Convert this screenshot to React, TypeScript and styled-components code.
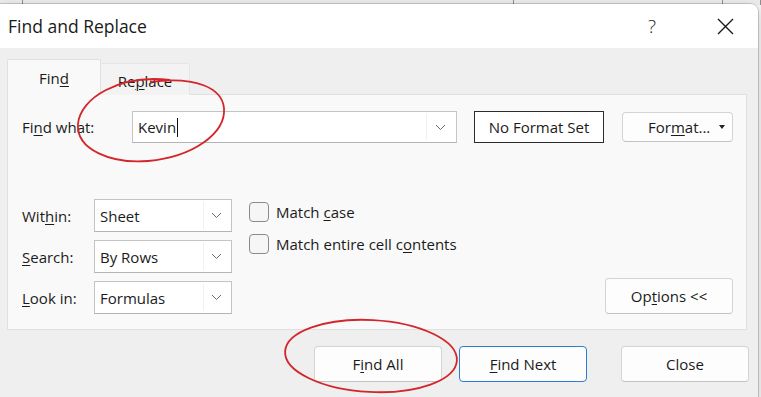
import styled, { createGlobalStyle } from "styled-components";

const GlobalStyle = createGlobalStyle`
  html, body {
    margin: 0;
    padding: 0;
  }
  body {
    width: 761px;
    height: 397px;
    overflow: hidden;
    background: #f2f2f2;
    font-family: "Open Sans", "Noto Sans", sans-serif;
    color: #1b1b1b;
  }
`;

const Screen = styled.div`
  position: relative;
  width: 761px;
  height: 397px;
  overflow: hidden;
  background: #f4f4f4;
`;

const SheetRow = styled.div`
  display: flex;
  height: 5px;
  overflow: hidden;
  background: #ececec;
`;

const SheetCell = styled.div<{ w: number }>`
  flex: 0 0 ${(p) => p.w}px;
  border-right: 1px solid #8f8f8f;
  box-sizing: border-box;
  padding-left: ${(p) => (p.w > 400 ? 328 : 0)}px;
`;

const SheetText = styled.span`
  display: block;
  margin-top: -19px;
  font-size: 20px;
  font-weight: 700;
  line-height: 22px;
  color: #111;
`;

const Dialog = styled.div`
  position: absolute;
  top: 4px;
  left: 0;
  width: 758px;
  height: 400px;
  display: flex;
  flex-direction: column;
  background: #efefef;
  border-radius: 0 8px 8px 0;
  box-shadow: 0 0 0 1px rgba(0, 0, 0, 0.16), 0 4px 14px rgba(0, 0, 0, 0.18);
  overflow: hidden;
`;

const TitleBar = styled.div`
  height: 44px;
  flex: 0 0 44px;
  display: flex;
  align-items: center;
  padding: 0 10px 0 8px;
  background: #ffffff;
`;

const Title = styled.div`
  font-size: 17.5px;
  color: #1a1a1a;
  flex: 1;
`;

const TitleActions = styled.div`
  display: flex;
  align-items: center;
  gap: 27px;
`;

const TitleButton = styled.div`
  width: 46px;
  height: 30px;
  display: flex;
  align-items: center;
  justify-content: center;
  font-size: 19px;
  font-weight: 300;
  color: #222;
`;

const Body = styled.div`
  flex: 1;
  padding: 12px 11px 0 7px;
`;

const Tabs = styled.div`
  display: flex;
  align-items: flex-end;
  height: 35px;
  margin-bottom: -1px;
  position: relative;
  z-index: 1;
`;

const Tab = styled.div<{ active?: boolean }>`
  box-sizing: border-box;
  width: ${(p) => (p.active ? 94 : 89)}px;
  height: ${(p) => (p.active ? 36 : 32)}px;
  display: flex;
  align-items: center;
  justify-content: center;
  font-size: 15px;
  padding-top: ${(p) => (p.active ? 1 : 2)}px;
  background: ${(p) => (p.active ? "#f9f9f9" : "#f3f3f3")};
  border: 1px solid ${(p) => (p.active ? "#e0e0e0" : "#e6e6e6")};
  border-bottom: none;
  border-left: ${(p) => (p.active ? "1px solid #e0e0e0" : "none")};
  border-radius: 2px 2px 0 0;
`;

const Key = styled.u`
  text-decoration: underline;
  text-underline-offset: 2px;
  text-decoration-thickness: 1px;
`;

const Panel = styled.div`
  box-sizing: border-box;
  height: 236px;
  padding: 16px 13px 0 14px;
  background: #f9f9f9;
  border: 1px solid #e0e0e0;
`;

const FindRow = styled.div`
  display: flex;
  align-items: center;
  height: 32px;
`;

const FieldLabel = styled.div<{ w: number }>`
  width: ${(p) => p.w}px;
  flex: 0 0 ${(p) => p.w}px;
  font-size: 15px;
  color: #1b1b1b;
`;

const Combo = styled.div<{ w: number; h: number }>`
  box-sizing: border-box;
  width: ${(p) => p.w}px;
  height: ${(p) => p.h}px;
  display: flex;
  align-items: stretch;
  background: #ffffff;
  border: 1px solid #c4c4c4;
  border-bottom-color: #b4b4b4;
`;

const ComboText = styled.div`
  flex: 1;
  display: flex;
  align-items: center;
  padding-left: 5px;
  font-size: 15px;
  color: #1b1b1b;
`;

const Caret = styled.span`
  display: inline-block;
  width: 1px;
  height: 19px;
  margin-left: 1px;
  background: #111;
`;

const ComboArrow = styled.div<{ w: number }>`
  width: ${(p) => p.w}px;
  display: flex;
  align-items: center;
  justify-content: center;
  border-left: 1px solid #f0f0f0;
  margin: 2px 2px 2px 0;
`;

const FormatBox = styled.div`
  box-sizing: border-box;
  width: 130px;
  height: 32px;
  margin-left: 17px;
  display: flex;
  align-items: center;
  justify-content: center;
  border: 1.5px solid #2b2b2b;
  background: #ffffff;
  font-size: 15px;
`;

const Button = styled.div<{ w: number; h: number; primary?: boolean }>`
  box-sizing: border-box;
  width: ${(p) => p.w}px;
  height: ${(p) => p.h}px;
  display: flex;
  align-items: center;
  justify-content: center;
  font-size: 15px;
  color: #1b1b1b;
  background: #fdfdfd;
  border: 1px solid ${(p) => (p.primary ? "#2f7dd1" : "#d4d4d4")};
  border-bottom-color: ${(p) => (p.primary ? "#2f7dd1" : "#c2c2c2")};
  border-radius: 4px;
`;

const FormatButton = styled(Button)`
  margin-left: 18px;
  justify-content: flex-start;
  padding: 0 5px 0 25px;
`;

const DropMark = styled.span`
  margin-left: auto;
  width: 0;
  height: 0;
  border-left: 3px solid transparent;
  border-right: 3px solid transparent;
  border-top: 4px solid #222;
  margin-right: 2px;
`;

const OptionsArea = styled.div`
  display: flex;
  margin-top: 56px;
`;

const SelectGrid = styled.div`
  display: grid;
  grid-template-columns: 72px 138px;
  grid-auto-rows: 33px;
  row-gap: 8px;
  align-items: center;
`;

const CheckColumn = styled.div`
  display: flex;
  flex-direction: column;
  gap: 12px;
  margin: 3px 0 0 17px;
`;

const CheckRow = styled.label`
  display: flex;
  align-items: center;
  gap: 7px;
  font-size: 15px;
  height: 20px;
`;

const Box = styled.span`
  box-sizing: border-box;
  width: 20px;
  height: 20px;
  border: 1px solid #8a8a8a;
  border-radius: 4px;
  background: #f6f6f6;
`;

const OptionsButton = styled(Button)`
  margin-left: auto;
  align-self: flex-end;
`;

const Footer = styled.div`
  display: flex;
  justify-content: flex-end;
  gap: 17px;
  padding-top: 16px;
  margin-right: -2px;
`;

const CloseButton = styled(Button)`
  margin-left: 17px;
`;

const Annotations = styled.svg`
  position: absolute;
  left: 0;
  top: 0;
  pointer-events: none;
  z-index: 10;
`;

function Chevron() {
  return (
    <svg width="11" height="7" viewBox="0 0 11 7">
      <polyline points="1,1 5.5,5.5 10,1" fill="none" stroke="#6b6b6b" strokeWidth="1" />
    </svg>
  );
}

function Select({ value }: { value: string }) {
  return (
    <Combo w={138} h={33}>
      <ComboText>{value}</ComboText>
      <ComboArrow w={25}>
        <Chevron />
      </ComboArrow>
    </Combo>
  );
}

export default function App() {
  return (
    <Screen>
      <GlobalStyle />
      <SheetRow>
        <SheetCell w={23} />
        <SheetCell w={491}>
          <SheetText>Cameron</SheetText>
        </SheetCell>
        <SheetCell w={209} />
        <SheetCell w={38} />
      </SheetRow>

      <Dialog>
        <TitleBar>
          <Title>Find and Replace</Title>
          <TitleActions>
            <TitleButton>?</TitleButton>
            <TitleButton>
              <svg width="17" height="17" viewBox="0 0 17 17">
                <path d="M1 1 L16 16 M16 1 L1 16" stroke="#1a1a1a" strokeWidth="1.4" />
              </svg>
            </TitleButton>
          </TitleActions>
        </TitleBar>

        <Body>
          <Tabs>
            <Tab active>
              <span>
                Fin<Key>d</Key>
              </span>
            </Tab>
            <Tab>
              <span>
                Re<Key>p</Key>lace
              </span>
            </Tab>
          </Tabs>

          <Panel>
            <FindRow>
              <FieldLabel w={110}>
                Fi<Key>n</Key>d what:
              </FieldLabel>
              <Combo w={325} h={32}>
                <ComboText>
                  Kevin
                  <Caret />
                </ComboText>
                <ComboArrow w={27}>
                  <Chevron />
                </ComboArrow>
              </Combo>
              <FormatBox>No Format Set</FormatBox>
              <FormatButton w={111} h={30}>
                <span>
                  For<Key>m</Key>at...
                </span>
                <DropMark />
              </FormatButton>
            </FindRow>

            <OptionsArea>
              <SelectGrid>
                <FieldLabel w={72}>
                  Wit<Key>h</Key>in:
                </FieldLabel>
                <Select value="Sheet" />
                <FieldLabel w={72}>
                  <Key>S</Key>earch:
                </FieldLabel>
                <Select value="By Rows" />
                <FieldLabel w={72}>
                  <Key>L</Key>ook in:
                </FieldLabel>
                <Select value="Formulas" />
              </SelectGrid>

              <CheckColumn>
                <CheckRow>
                  <Box />
                  <span>
                    Match <Key>c</Key>ase
                  </span>
                </CheckRow>
                <CheckRow>
                  <Box />
                  <span>
                    Match entire cell c<Key>o</Key>ntents
                  </span>
                </CheckRow>
              </CheckColumn>

              <OptionsButton w={128} h={36}>
                <span>
                  Op<Key>t</Key>ions &lt;&lt;
                </span>
              </OptionsButton>
            </OptionsArea>
          </Panel>

          <Footer>
            <Button w={128} h={36}>
              <span>
                F<Key>i</Key>nd All
              </span>
            </Button>
            <Button w={128} h={36} primary>
              <span>
                <Key>F</Key>ind Next
              </span>
            </Button>
            <CloseButton w={128} h={36}>
              Close
            </CloseButton>
          </Footer>
        </Body>
      </Dialog>

      <Annotations width="761" height="397" viewBox="0 0 761 397">
        <path
          d="M170 80 C 120 74, 80 98, 78 124 C 76 150, 112 164, 148 161 C 192 157, 226 134, 224 108 C 222 88, 196 76, 150 82"
          fill="none"
          stroke="#d3262b"
          strokeWidth="1.8"
        />
        <ellipse
          cx="371"
          cy="356"
          rx="86"
          ry="36"
          transform="rotate(3 371 356)"
          fill="none"
          stroke="#d3262b"
          strokeWidth="1.8"
        />
      </Annotations>
    </Screen>
  );
}
